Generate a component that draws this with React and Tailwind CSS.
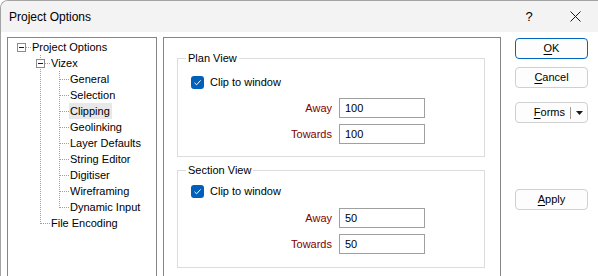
import React from "react";

const treeRows = [
  { label: "Project Options", level: 0, box: true },
  { label: "Vizex", level: 1, box: true, l1: "full" },
  { label: "General", level: 2, l2: "full" },
  { label: "Selection", level: 2, l2: "full" },
  { label: "Clipping", level: 2, l2: "full", selected: true },
  { label: "Geolinking", level: 2, l2: "full" },
  { label: "Layer Defaults", level: 2, l2: "full" },
  { label: "String Editor", level: 2, l2: "full" },
  { label: "Digitiser", level: 2, l2: "full" },
  { label: "Wireframing", level: 2, l2: "full" },
  { label: "Dynamic Input", level: 2, l2: "half" },
  { label: "File Encoding", level: 1, l1: "half" },
];

const dot = { stroke: "#a0a0a0", strokeWidth: 1, strokeDasharray: "1 1" };

function ExpandBox({ x }) {
  return (
    <g>
      <rect x={x + 0.5} y="4.5" width="8" height="8" fill="#fff" stroke="#8c8c8c" />
      <line x1={x + 2} x2={x + 7} y1="8.5" y2="8.5" stroke="#1a1a1a" />
    </g>
  );
}

function TreeLines({ row }) {
  if (row.level === 0) {
    return (
      <svg width="23" height="16" className="shrink-0">
        <line x1="18" x2="23" y1="8.5" y2="8.5" {...dot} />
        <ExpandBox x={9} />
      </svg>
    );
  }
  if (row.level === 1) {
    return (
      <svg width="42" height="16" className="shrink-0">
        <line x1="32.5" x2="32.5" y1="0" y2={row.l1 === "full" ? 16 : 9} {...dot} />
        {row.box ? (
          <>
            <line x1="37" x2="42" y1="8.5" y2="8.5" {...dot} />
            <ExpandBox x={28} />
          </>
        ) : (
          <line x1="33" x2="42" y1="8.5" y2="8.5" {...dot} />
        )}
      </svg>
    );
  }
  return (
    <svg width="61" height="16" className="shrink-0">
      <line x1="32.5" x2="32.5" y1="0" y2="16" {...dot} />
      <line x1="51.5" x2="51.5" y1="0" y2={row.l2 === "full" ? 16 : 9} {...dot} />
      <line x1="52" x2="61" y1="8.5" y2="8.5" {...dot} />
    </svg>
  );
}

function Checkbox() {
  return (
    <span className="flex h-[13px] w-[13px] items-center justify-center rounded-[3px] bg-[#005fb8]">
      <svg width="9" height="9" viewBox="0 0 9 9">
        <path d="M1.5 4.8 L3.6 6.8 L7.6 2.4" fill="none" stroke="#fff" strokeWidth="1" />
      </svg>
    </span>
  );
}

function Field({ label, value, className }) {
  return (
    <div className={`flex h-[20px] items-center ${className}`}>
      <span className="w-[146px] text-right text-[#800000]">{label}</span>
      <div className="ml-[7px] flex h-[20px] w-[86px] items-center border border-[#a0a0a0] bg-white pl-[5px] text-black">
        {value}
      </div>
    </div>
  );
}

function GroupBox({ title, away, towards, className, padTop, gapTop, padBottom }) {
  return (
    <fieldset className={`border border-[#dcdcdc] pl-[8px] ${className} ${padBottom}`}>
      <legend className="h-[14px] px-[2px] leading-[14px] text-black">{title}</legend>
      <div className={`flex h-[16px] items-center pl-[5px] ${padTop}`}>
        <Checkbox />
        <span className="ml-[6px] text-black">Clip to window</span>
      </div>
      <Field label="Away" value={away} className={gapTop} />
      <Field label="Towards" value={towards} className="mt-[6px]" />
    </fieldset>
  );
}

function DialogButton({ children, className = "" }) {
  return (
    <button className={`flex h-[21px] w-[73px] items-center justify-center rounded-[4px] border bg-[#fdfdfd] text-black ${className}`}>
      {children}
    </button>
  );
}

export default function App() {
  return (
    <div className="h-[276px] w-[598px] overflow-hidden bg-white font-['Liberation_Sans',Arial,sans-serif] text-[11px]">
      <div className="flex h-full flex-col overflow-hidden rounded-tl-[8px] border-l border-t border-[#a3a3a3]">
        {/* Title bar */}
        <div className="flex h-[31px] shrink-0 items-center bg-[#f3f3f3]">
          <span className="pl-[8px] text-[12px] text-black">Project Options</span>
          <div className="ml-auto flex h-full">
            <div className="flex w-[46px] items-center justify-center text-[13px] text-black">?</div>
            <div className="flex w-[46px] items-center justify-center">
              <svg width="11" height="11" viewBox="0 0 11 11">
                <path d="M0.5 0.5 L10.5 10.5 M10.5 0.5 L0.5 10.5" stroke="#1a1a1a" strokeWidth="1" />
              </svg>
            </div>
          </div>
        </div>

        {/* Body */}
        <div className="flex min-h-0 flex-1 pl-[6px] pt-[5px]">
          {/* Tree */}
          <div className="w-[150px] shrink-0 border border-b-0 border-[#858585] bg-white pt-[1px]">
            {treeRows.map((row) => (
              <div key={row.label} className="flex h-[16px] items-center">
                <TreeLines row={row} />
                <span
                  className={`pl-[1px] pr-[2px] leading-[16px] text-black ${row.selected ? "bg-[#e8e8e8]" : ""}`}
                >
                  {row.label}
                </span>
              </div>
            ))}
          </div>

          {/* Settings panel */}
          <div className="ml-[6px] w-[338px] shrink-0 border border-b-0 border-[#858585] bg-white pl-[13px] pr-[15px]">
            <GroupBox
              title="Plan View"
              away="100"
              towards="100"
              className="mt-[13px]"
              padTop="mt-[9px]"
              gapTop="mt-[8px]"
              padBottom="pb-[12px]"
            />
            <GroupBox
              title="Section View"
              away="50"
              towards="50"
              className="mt-[6px]"
              padTop="mt-[6px]"
              gapTop="mt-[9px]"
              padBottom="pb-[13px]"
            />
          </div>

          {/* Buttons */}
          <div className="ml-[14px] flex flex-col pt-[1px]">
            <DialogButton className="border-[#0067c0]">
              <span><u className="underline-offset-[2px]">O</u>K</span>
            </DialogButton>
            <DialogButton className="mt-[8px] border-[#d0d0d0]">
              <span><u className="underline-offset-[2px]">C</u>ancel</span>
            </DialogButton>
            <div className="mt-[14px] flex h-[21px] w-[73px] items-center rounded-[4px] border border-[#d0d0d0] bg-[#fdfdfd] text-black">
              <span className="flex-1 pr-[5px] text-right">
                <u className="underline-offset-[2px]">F</u>orms
              </span>
              <span className="h-[12px] w-px bg-[#9a9a9a]" />
              <span className="flex w-[16px] items-center justify-center">
                <svg width="7" height="4" viewBox="0 0 7 4">
                  <path d="M0 0 H7 L3.5 4 Z" fill="#1a1a1a" />
                </svg>
              </span>
            </div>
            <DialogButton className="mt-[66px] border-[#d0d0d0]">
              <span><u className="underline-offset-[2px]">A</u>pply</span>
            </DialogButton>
          </div>
        </div>
      </div>
    </div>
  );
}
